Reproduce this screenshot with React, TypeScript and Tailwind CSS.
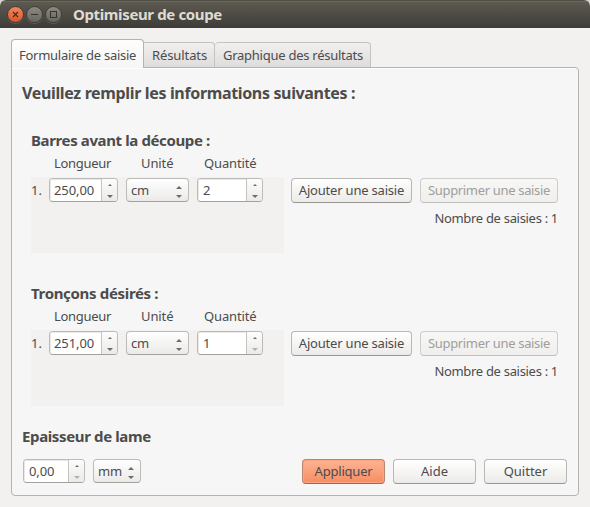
import type { ReactNode } from 'react';

const OUTLINE = 'rounded-[4px] border border-[#bdbbb7] border-b-[#a3a19c]';

function Arrow({ up, small, faded }: { up?: boolean; small?: boolean; faded?: boolean }) {
  const w = small ? 4 : 6;
  const h = small ? 2 : 3;
  return (
    <svg width={w} height={h} viewBox="0 0 6 3" className={faded ? 'text-[#b4b2ae]' : 'text-[#6d6b68]'}>
      <path d={up ? 'M0 3 L3 0 L6 3Z' : 'M0 0 L6 0 L3 3Z'} fill="currentColor" />
    </svg>
  );
}

function Spinner({ value, width, inset, faded }: { value: string; width: string; inset: string; faded?: boolean }) {
  return (
    <div className={`flex h-[24px] overflow-hidden bg-white ${OUTLINE} ${width}`}>
      <div className={`flex flex-1 items-center pt-px tracking-[-0.1px] shadow-[inset_1px_1px_0_#e9e8e6] ${inset}`}>{value}</div>
      <div className="flex w-4 flex-col items-center border-l border-[#c6c4c0] bg-linear-to-b from-[#fdfdfd] to-[#ebeae8] pt-[5px]">
        <Arrow up small />
        <div className="h-[9px]" />
        <Arrow faded={faded} />
      </div>
    </div>
  );
}

function Combo({ value, width }: { value: string; width: string }) {
  return (
    <div className={`flex h-[24px] items-center justify-between bg-linear-to-b from-white to-[#ebeae8] pl-[4px] pr-[6px] ${OUTLINE} ${width}`}>
      <span className="pt-px tracking-[-0.2px]">{value}</span>
      <div className="flex flex-col gap-[6px] pt-[3px]">
        <Arrow up />
        <Arrow />
      </div>
    </div>
  );
}

function Button({ children, className }: { children: ReactNode; className: string }) {
  return (
    <div className={`flex h-[25px] items-center justify-center rounded-[4px] border pt-px ${className}`}>{children}</div>
  );
}

const NORMAL = 'border-[#b9b7b3] border-b-[#999792] bg-linear-to-b from-white to-[#ecebe9]';

function Section({ title, titleClass, length, quantity, atMinimum }: { title: string; titleClass: string; length: string; quantity: string; atMinimum?: boolean }) {
  return (
    <section className="flex h-[153px] pl-[19px]">
      <div className="w-[253px]">
        <h2 className={`h-[22px] text-[15px] leading-[20px] font-bold ${titleClass}`}>{title}</h2>
        <div className="flex h-[25px] pl-[18px] leading-[22px]">
          <div className="w-[69px] pl-[5px] tracking-[-0.3px]">Longueur</div>
          <div className="ml-2 w-[63px] pl-[15px] tracking-[-0.1px]">Unité</div>
          <div className="ml-2 w-[66px] pl-[7px] tracking-[-0.15px]">Quantité</div>
        </div>
        <div className="flex h-[76px] bg-[#f2f1ef] pt-px">
          <div className="w-[18px] leading-[25px]">1.</div>
          <Spinner value={length} width="w-[69px]" inset="pl-[4px]" />
          <div className="w-2" />
          <Combo value="cm" width="w-[63px]" />
          <div className="w-2" />
          <Spinner value={quantity} width="w-[66px]" inset="pl-[5px]" faded={atMinimum} />
        </div>
      </div>
      <div className="ml-[7px] pt-[48px]">
        <div className="flex gap-2">
          <Button className={`w-[121px] tracking-[-0.2px] ${NORMAL}`}>Ajouter une saisie</Button>
          <Button className="w-[138px] border-[#cfcdca] border-b-[#c2c0bc] bg-linear-to-b from-[#f7f7f6] to-[#f0efed] tracking-[-0.33px] text-[#a09e9b]">
            Supprimer une saisie
          </Button>
        </div>
        <p className="mt-1 text-right leading-[22px] tracking-[-0.31px]">Nombre de saisies : 1</p>
      </div>
    </section>
  );
}

function WindowButton({ close, children }: { close?: boolean; children: ReactNode }) {
  return (
    <div
      className={`flex size-[17px] items-center justify-center rounded-full border border-[#3f3e39] shadow-[0_1px_0_#625f56] ${
        close ? 'bg-linear-to-b from-[#f4855c] to-[#e2531f]' : 'bg-linear-to-b from-[#8b8980] to-[#686560]'
      }`}
    >
      <svg width="9" height="9" viewBox="0 0 9 9" fill="none" stroke="#35342f" strokeWidth="1" className="shrink-0">
        {children}
      </svg>
    </div>
  );
}

export default function App() {
  return (
    <div className="h-[507px] w-[590px] overflow-hidden bg-[#d5d5d5] font-['Noto_Sans','Liberation_Sans',sans-serif] text-[13px] whitespace-nowrap text-[#4c4c4c]">
      <div className="h-full overflow-hidden rounded-t-[6px] bg-[#f2f1ef]">
        <header className="flex h-[28px] items-center border-t border-[#504d45] bg-linear-to-b from-[#5e5b51] to-[#3d3c38] pl-[7px] shadow-[inset_0_1px_0_#6a675d]">
          <div className="flex gap-[2px]">
            <WindowButton close>
              <path d="M2 2 L7 7 M7 2 L2 7" strokeWidth="1.2" />
            </WindowButton>
            <WindowButton>
              <path d="M1 4.5 H8" />
            </WindowButton>
            <WindowButton>
              <rect x="1.5" y="1.5" width="6" height="6" />
            </WindowButton>
          </div>
          <h1 className="-mt-px ml-[11px] text-[15px] leading-[20px] font-bold tracking-[-0.37px] text-[#dfdbd2]">Optimiseur de coupe</h1>
        </header>

        <nav className="relative z-10 flex h-[40px] items-end pl-[11px]">
          <div className="h-[29px] w-[133px] rounded-t-[4px] border border-b-0 border-[#b5b3ae] bg-linear-to-b from-[#fdfdfd] to-[#f6f6f6] pl-[7px] leading-[30px] tracking-[-0.27px]">
            Formulaire de saisie
          </div>
          <div className="mb-px h-[25px] w-[71px] rounded-tr-[4px] border border-b-0 border-l-0 border-[#c5c3bf] bg-linear-to-b from-[#f1f0ee] to-[#dfdddb] pl-2 leading-[25px] tracking-[-0.1px]">
            Résultats
          </div>
          <div className="mb-px h-[25px] w-[156px] rounded-t-[4px] border border-b-0 border-l-0 border-[#c5c3bf] bg-linear-to-b from-[#f1f0ee] to-[#dfdddb] pl-2 leading-[25px] tracking-[-0.26px]">
            Graphique des résultats
          </div>
        </nav>

        <main className="-mt-px ml-[11px] h-[429px] w-[568px] rounded-[4px] rounded-tl-none border border-[#b5b3ae] bg-[#f6f6f6] shadow-[inset_0_1px_0_#fff]">
          <h2 className="h-[62px] pt-[14px] pl-[10px] text-[16px] leading-[23px] font-bold tracking-[-0.35px]">
            Veuillez remplir les informations suivantes :
          </h2>
          <Section title="Barres avant la découpe :" titleClass="tracking-[-0.38px]" length="250,00" quantity="2" />
          <Section title="Tronçons désirés :" titleClass="tracking-[-0.33px]" length="251,00" quantity="1" atMinimum />
          <h2 className="-mt-[10px] h-[33px] pl-[10px] text-[15px] leading-[20px] font-bold tracking-[-0.37px]">Epaisseur de lame</h2>
          <div className="flex pl-[11px]">
            <Spinner value="0,00" width="w-[62px]" inset="pl-[5px]" faded />
            <div className="w-2" />
            <Combo value="mm" width="w-[48px]" />
            <div className="ml-[161px] flex gap-2">
              <Button className="w-[83px] border-[#b98770] border-b-[#8f6c5c] bg-linear-to-b from-[#fdb394] to-[#f58d63] tracking-[-0.2px] shadow-[inset_0_0_0_1px_#fca582]">
                Appliquer
              </Button>
              <Button className={`w-[83px] ${NORMAL}`}>Aide</Button>
              <Button className={`w-[83px] ${NORMAL}`}>Quitter</Button>
            </div>
          </div>
        </main>
      </div>
    </div>
  );
}
